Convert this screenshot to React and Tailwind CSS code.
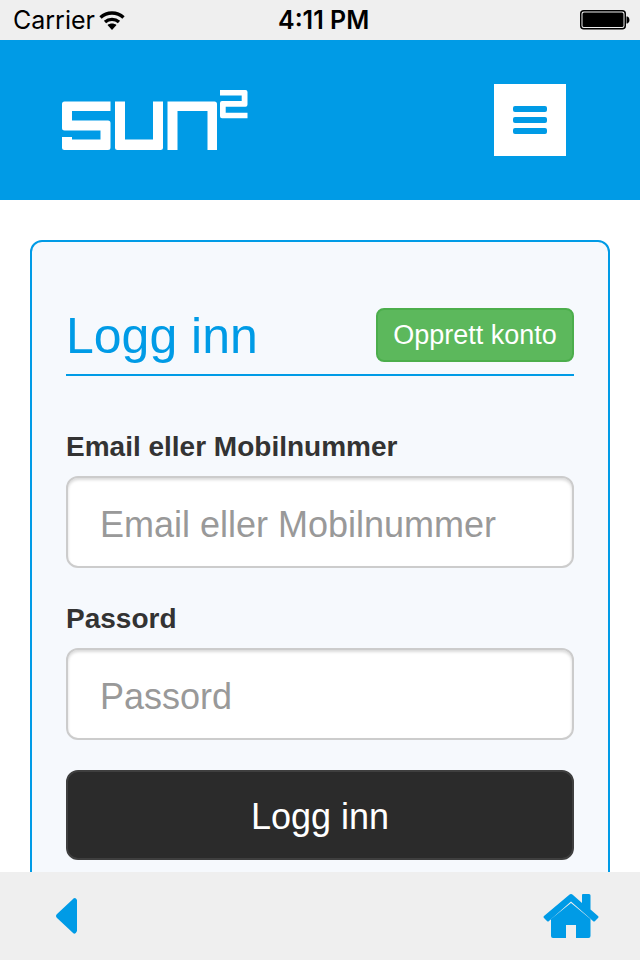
import React from 'react'

const font = { sans: "font-['Liberation_Sans',Arial,sans-serif]" }

const Logo = () => (
  <svg width="187" height="60" viewBox="62 90 187 60" fill="#fff">
    <path d="M64.5 101.5H110.5V111H72V120.5H108Q110.5 120.5 110.5 123V147.5Q110.5 150 108 150H64.5Q62 150 62 147.5V137H72V139.5H100.5V130.5H64.5Q62 130.5 62 128V104Q62 101.5 64.5 101.5Z" />
    <path d="M115 101.5H125V139.5H153V101.5H163V147.5Q163 150 160.5 150H117.5Q115 150 115 147.5Z" />
    <path d="M167.5 150V101.5H214.5Q217 101.5 217 104V150H207.5V111H177.5V150Z" />
    <path d="M220 90H245.5Q247.5 90 247.5 92V104.5Q247.5 106.7 245.5 106.7H225.7V112.7H247.5V118.3H222Q220 118.3 220 116.3V103Q220 101 222 101H241.7V95.5H220Z" />
  </svg>
)

const Wifi = () => (
  <svg width="26" height="20" viewBox="0 0 26 20" fill="none" stroke="#000" strokeWidth="3.4">
    <path d="M1.5 7.5C8 1.5 18 1.5 24.5 7.5" />
    <path d="M6 12C10 8.5 16 8.5 20 12" />
    <path d="M8.5 15L13 20L17.5 15C15 13 11 13 8.5 15Z" fill="#000" stroke="none" />
  </svg>
)

const Battery = () => (
  <svg width="50" height="20" viewBox="0 0 50 20">
    <rect x="0.75" y="0.75" width="44.5" height="18" rx="3" fill="none" stroke="#000" strokeWidth="1.5" />
    <rect x="2.5" y="2.5" width="41" height="14.5" rx="1.5" fill="#000" />
    <path d="M46.5 6.5H47.5Q49.5 7 49.5 10Q49.5 13 47.5 13.5H46.5Z" fill="#000" />
  </svg>
)

const Home = () => (
  <svg width="56" height="44" viewBox="543 893 56 44" fill="#009be6">
    <path d="M571 902L590.5 918V935Q590.5 937 588.5 937H576V924H566V937H553Q551 937 551 935V918Z" />
    <path d="M569 894Q571 892 573 894L582 902V894Q582 893 583 893H589Q590.5 893 590.5 894.5V908.5L598 915Q599 916 598 917L595 920Q594 921 593 920L571 900.5L549 920Q548 921 547 920L544 917Q543 916 544 915Z" />
  </svg>
)

const Back = () => (
  <svg width="22" height="38" viewBox="56 896 22 38" fill="#009be6">
    <path d="M72 899Q75 895 77 899V930Q75 935 72 931L57 917Q55 915 57 913Z" />
  </svg>
)

const Field = ({ label, type = 'text', className }) => (
  <div className={className}>
    <label className="block text-[28px] leading-[32px] font-bold text-[#333] pt-px -mb-px">{label}</label>
    <input
      type={type}
      placeholder={label}
      className="mt-[14px] block w-full h-[92px] px-[32px] pt-[5px] bg-white border-2 border-[#ccc] rounded-xl text-[36px] text-[#555] placeholder:text-[#999] shadow-[inset_0_2px_3px_rgba(0,0,0,0.15)] outline-none"
    />
  </div>
)

export default function App() {
  return (
    <div className={`h-[960px] w-[640px] flex flex-col overflow-hidden bg-white ${font.sans}`}>
      {/* Status bar */}
      <div className="h-10 shrink-0 bg-[#efefef] relative flex items-center justify-between pl-[13px] pr-[10px] text-black font-['Inter',sans-serif]">
        <div className="flex items-center gap-[4px]">
          <span className="text-[25px] leading-none">Carrier</span>
          <Wifi />
        </div>
        <span className="absolute left-[278px] top-[8px] text-[25px] leading-none font-semibold">4:11 PM</span>
        <Battery />
      </div>

      {/* Header */}
      <div className="h-40 shrink-0 bg-[#009be6] flex items-center justify-between pl-[62px] pr-[74px]">
        <Logo />
        <button className="w-[72px] h-[72px] bg-white flex flex-col items-center justify-center gap-[5px]">
          <span className="block w-[34px] h-[6px] rounded-[2px] bg-[#009be6]"></span>
          <span className="block w-[34px] h-[6px] rounded-[2px] bg-[#009be6]"></span>
          <span className="block w-[34px] h-[6px] rounded-[2px] bg-[#009be6]"></span>
        </button>
      </div>

      {/* Content */}
      <div className="flex-1 overflow-hidden px-[30px] pt-10">
        <div className="border-2 border-[#009be6] rounded-xl bg-[#f6f9fd] px-[34px] pt-[66px] pb-10">
          <div className="h-[68px] flex items-start justify-between border-b-2 border-[#009be6]">
            <h1 className="text-[50px] leading-[56px] text-[#009be6]">Logg inn</h1>
            <button className="w-[198px] h-[54px] rounded-lg bg-[#5cb85c] border-2 border-[#4cae4c] text-white text-[27px]">Opprett konto</button>
          </div>
          <Field label="Email eller Mobilnummer" className="mt-[54px]" />
          <Field label="Passord" type="password" className="mt-[34px]" />
          <button className="mt-[30px] pt-[3px] w-full h-[90px] rounded-xl bg-[#2b2b2b] border-2 border-[#3f3f3f] text-white text-[36px]">Logg inn</button>
        </div>
      </div>

      {/* Bottom bar */}
      <div className="h-[88px] shrink-0 bg-[#efefef] flex items-center justify-between pl-[56px] pr-[41px]">
        <Back />
        <Home />
      </div>
    </div>
  )
}
